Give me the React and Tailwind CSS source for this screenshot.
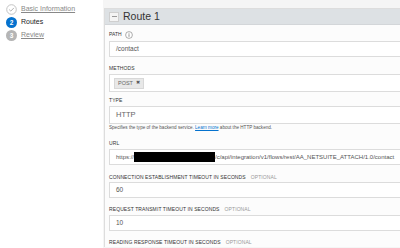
import React from "react";

const Label = ({ text, optional }) => (
  <div className="flex items-center gap-[5px] h-[8px] text-[5px] tracking-[0.1px] uppercase text-[#333] whitespace-nowrap">
    <span>{text}</span>
    {optional && <span className="text-[#999]">Optional</span>}
  </div>
);

const Field = ({ children, className = "", size = "text-[6.5px]", h = "h-[16px]" }) => (
  <div className={`${h} ${size} border border-[#dcdcdc] bg-white flex items-center px-[6px] text-[#555] ${className}`}>
    {children}
  </div>
);

const Step = ({ state, n, label }) => (
  <div className="flex items-center gap-[4px] h-[13px]">
    {state === "done" && (
      <svg width="11" height="11" viewBox="0 0 11 11">
        <circle cx="5.5" cy="5.5" r="4.8" fill="white" stroke="#bdbdbd" strokeWidth="0.9" />
        <path d="M3.2 5.6 L4.8 7.1 L7.9 3.9" fill="none" stroke="#a8a8a8" strokeWidth="0.9" />
      </svg>
    )}
    {state === "active" && (
      <div className="w-[11px] h-[11px] rounded-full bg-[#0572ce] text-white text-[6.5px] font-bold flex items-center justify-center">{n}</div>
    )}
    {state === "todo" && (
      <div className="w-[11px] h-[11px] rounded-full bg-[#b5b5b5] text-white text-[6.5px] font-bold flex items-center justify-center">{n}</div>
    )}
    <span className={state === "active" ? "text-[7px] text-[#222]" : "text-[7px] text-[#888] underline"}>{label}</span>
  </div>
);

export default function App() {
  return (
    <div className="w-[400px] h-[248px] flex overflow-hidden bg-white" style={{ fontFamily: "'Liberation Sans', Arial, sans-serif" }}>
      <div className="w-[103px] shrink-0 bg-white px-[6px] pt-[3px] flex flex-col">
        <Step state="done" label="Basic Information" />
        <Step state="active" n="2" label="Routes" />
        <Step state="todo" n="3" label="Review" />
      </div>
      <div className="flex-1 bg-[#f5f5f5] pl-[1px] pt-[8px] overflow-hidden">
        <div className="w-[320px] border-l border-t border-[#dddddd] bg-[#fcfcfc]">
          <div className="h-[16px] bg-[#dde1e4] border-b border-[#d3d6d9] flex items-center gap-[4px] pl-[4px]">
            <div className="w-[10px] h-[10px] bg-[#f4f4f4] border border-[#cfcfcf] flex items-center justify-center">
              <div className="w-[5px] h-[1px] bg-[#999]" />
            </div>
            <span className="text-[10.5px] text-[#333]">Route 1</span>
          </div>
          <div className="pl-[4px] pt-[6px] flex flex-col">
            <div className="flex items-center gap-[3px] h-[8px]">
              <span className="text-[5px] uppercase text-[#333]">Path</span>
              <svg width="8" height="8" viewBox="0 0 8 8">
                <circle cx="4" cy="4" r="3.4" fill="white" stroke="#777" strokeWidth="0.6" />
                <rect x="3.65" y="3.2" width="0.7" height="2.6" fill="#666" />
                <rect x="3.65" y="1.9" width="0.7" height="0.7" fill="#666" />
              </svg>
            </div>
            <Field className="mt-[2px]">/contact</Field>
            <div className="mt-[8px]"><Label text="Methods" /></div>
            <Field h="h-[18px]" className="mt-[1px] pl-[4px]">
              <div className="h-[11px] bg-[#e8e8e8] border border-[#d8d8d8] flex items-center gap-[3px] px-[3px] text-[5.5px] text-[#666]">
                <span>POST</span>
                <span className="text-[5px] text-[#555]">✖</span>
              </div>
            </Field>
            <div className="mt-[5px]"><Label text="Type" /></div>
            <Field h="h-[18px]" size="text-[7.5px]" className="mt-[1px] text-[#666]">HTTP</Field>
            <div className="mt-[1px] h-[6px] leading-[6px] text-[4.6px] text-[#555] whitespace-nowrap">
              Specifies the type of the backend service. <span className="text-[#0572ce] underline">Learn more</span> about the HTTP backend.
            </div>
            <div className="mt-[9px]"><Label text="URL" /></div>
            <Field size="text-[6px]" className="mt-[1px] whitespace-nowrap">
              <span>https://</span>
              <span className="inline-block w-[81px] h-[10px] bg-black" />
              <span>/c/api/integration/v1/flows/rest/AA_NETSUITE_ATTACH/1.0/contact</span>
            </Field>
            <div className="mt-[9px]"><Label text="Connection Establishment Timeout in Seconds" optional /></div>
            <Field>60</Field>
            <div className="mt-[8px]"><Label text="Request Transmit Timeout in Seconds" optional /></div>
            <Field className="mt-[1px]">10</Field>
            <div className="mt-[8px]"><Label text="Reading Response Timeout in Seconds" optional /></div>
          </div>
        </div>
      </div>
    </div>
  );
}
